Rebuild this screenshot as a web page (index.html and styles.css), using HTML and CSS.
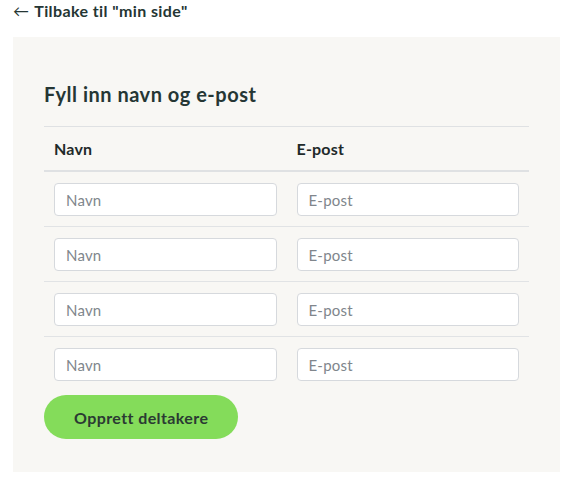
FILE: index.html
```html
<!DOCTYPE html>
<html lang="no">
<head>
<meta charset="utf-8">
<title>Fyll inn navn og e-post</title>
<link rel="stylesheet" href="styles.css">
</head>
<body>
<div class="page">
  <a class="back" href="#"><span class="arrow">&larr;</span> Tilbake til "min side"</a>
  <section class="card">
    <h2 class="title">Fyll inn navn og e-post</h2>
    <table class="grid">
      <thead>
        <tr><th>Navn</th><th>E-post</th></tr>
      </thead>
      <tbody>
        <tr><td><input class="field" placeholder="Navn"></td><td><input class="field" placeholder="E-post"></td></tr>
        <tr><td><input class="field" placeholder="Navn"></td><td><input class="field" placeholder="E-post"></td></tr>
        <tr><td><input class="field" placeholder="Navn"></td><td><input class="field" placeholder="E-post"></td></tr>
        <tr><td><input class="field" placeholder="Navn"></td><td><input class="field" placeholder="E-post"></td></tr>
      </tbody>
    </table>
    <button class="submit">Opprett deltakere</button>
  </section>
</div>
</body>
</html>
```
FILE: styles.css
```css
html, body {
  margin: 0;
  padding: 0;
  background: #ffffff;
}
body {
  font-family: Lato, "Noto Sans", sans-serif;
  color: #253634;
}
.page {
  padding: 1px 13px 0 13px;
}
.back {
  display: inline-block;
  font-size: 16px;
  font-weight: 700;
  line-height: 20px;
  letter-spacing: 0.4px;
  color: #253634;
  text-decoration: none;
}
.back .arrow {
  font-weight: 400;
  margin-right: 1px;
}
.card {
  margin-top: 16px;
  background: #f8f7f4;
  padding: 45px 31px 33px 31px;
}
.title {
  margin: 0 0 20px 0;
  font-size: 20px;
  font-weight: 700;
  line-height: 24px;
  letter-spacing: 0.5px;
  color: #253634;
}
.grid {
  width: 100%;
  border-collapse: collapse;
  table-layout: fixed;
}
.grid th {
  text-align: left;
  font-size: 16px;
  font-weight: 700;
  letter-spacing: 0.2px;
  padding: 0 10px;
  height: 43px;
  border-top: 1px solid #dfe1e3;
  border-bottom: 2px solid #dfe1e3;
  color: #1f2a2a;
}
.grid td {
  padding: 11px 10px 10px 10px;
  border-top: 1px solid #e1e3e5;
}
.field {
  display: block;
  box-sizing: border-box;
  width: 100%;
  height: 33px;
  border: 1px solid #d6d9dd;
  border-radius: 4px;
  background: #fff;
  padding: 0 11px;
  font-family: Lato, "Noto Sans", sans-serif;
  font-size: 15px;
  letter-spacing: 0.2px;
  color: #253634;
}
.field::placeholder {
  color: #80868c;
}
.submit {
  display: block;
  margin-top: 4px;
  height: 44px;
  padding: 0 30px;
  border: none;
  border-radius: 22px;
  background: #84dc5a;
  font-family: Lato, "Noto Sans", sans-serif;
  font-size: 16px;
  font-weight: 700;
  letter-spacing: 0.4px;
  color: #2b3a33;
}
```
